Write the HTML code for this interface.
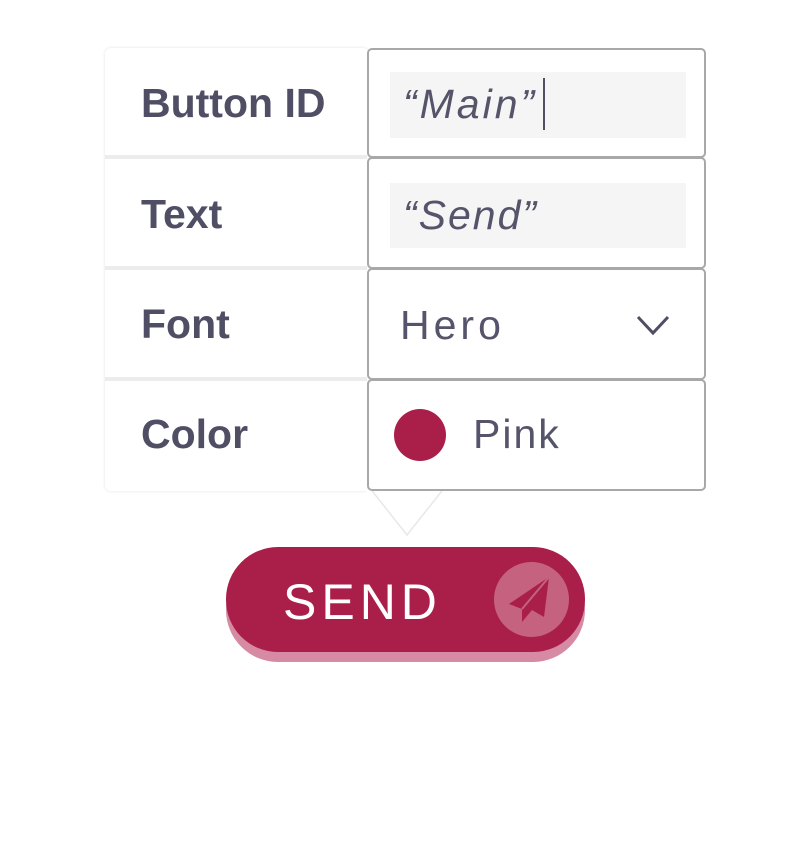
<!DOCTYPE html>
<html><head><style>
body{margin:0;width:810px;height:855px;background:#fff;position:relative;font-family:"Liberation Sans",sans-serif;overflow:hidden}
.a{position:absolute}
.lab{position:absolute;left:141px;font-weight:bold;font-size:41px;color:#4f4e64;letter-spacing:0px}
.box{position:absolute;left:367px;width:339px;border:2px solid #a8a8a8;border-radius:5px;background:#fff;box-sizing:border-box}
.fill{position:absolute;left:390px;width:296px;background:#f5f5f5}
.val{position:absolute;font-size:41px;color:#55546a;font-weight:300}
</style></head><body>
<div class="a" style="left:105px;top:48px;width:264px;height:443px;background:#fff;border-radius:6px;box-shadow:0 0 3px rgba(0,0,0,0.12)"></div>
<div class="a" style="left:105px;top:155px;width:262px;height:4px;background:#ececec"></div>
<div class="a" style="left:105px;top:266px;width:262px;height:4px;background:#ececec"></div>
<div class="a" style="left:105px;top:377px;width:262px;height:4px;background:#ececec"></div>
<div class="lab" style="top:80px">Button ID</div>
<div class="lab" style="top:191px">Text</div>
<div class="lab" style="top:301px">Font</div>
<div class="lab" style="top:411px">Color</div>
<svg class="a" style="left:365px;top:485px" width="84" height="54"><polygon points="4,2 80,2 42,50" fill="#fff" stroke="#e8e8e8" stroke-width="1.5"/><rect x="0" y="0" width="84" height="6" fill="#fff"/></svg>
<div class="box" style="top:48px;height:110px"></div>
<div class="box" style="top:157px;height:112px"></div>
<div class="box" style="top:268px;height:112px"></div>
<div class="box" style="top:379px;height:112px"></div>
<div class="fill" style="top:72px;height:66px"></div>
<div class="fill" style="top:183px;height:65px"></div>
<div class="val" style="left:403px;top:81px;font-style:italic;letter-spacing:3px">“Main”</div>
<div class="a" style="left:543px;top:78px;width:2px;height:52px;background:#4f4e64"></div>
<div class="val" style="left:403px;top:192px;font-style:italic;letter-spacing:2px">“Send”</div>
<div class="val" style="left:400px;top:302px;letter-spacing:4px">Hero</div>
<svg class="a" style="left:636px;top:313px" width="36" height="24"><polyline points="2,4 17,20 32,4" fill="none" stroke="#4f4e64" stroke-width="3"/></svg>
<div class="a" style="left:394px;top:409px;width:52px;height:52px;border-radius:50%;background:#aa1f4a"></div>
<div class="val" style="left:473px;top:411px;letter-spacing:2px">Pink</div>
<div class="a" style="left:226px;top:558px;width:359px;height:104px;border-radius:52px;background:#d68aa3"></div>
<div class="a" style="left:226px;top:547px;width:359px;height:105px;border-radius:52px;background:#aa1f4a"></div>
<div class="a" style="left:283px;top:573px;font-size:50px;color:#fff;letter-spacing:5px">SEND</div>
<div class="a" style="left:494px;top:562px;width:75px;height:75px;border-radius:50%;background:#c4627f"></div>
<svg class="a" style="left:494px;top:562px" width="75" height="75"><path d="M15,42 L55,15 L50,55 L38,48 L28,60 L28,47 Z" fill="#aa1f4a"/><path d="M28,47 L55,15" stroke="#c4627f" stroke-width="2"/></svg>
</body></html>
